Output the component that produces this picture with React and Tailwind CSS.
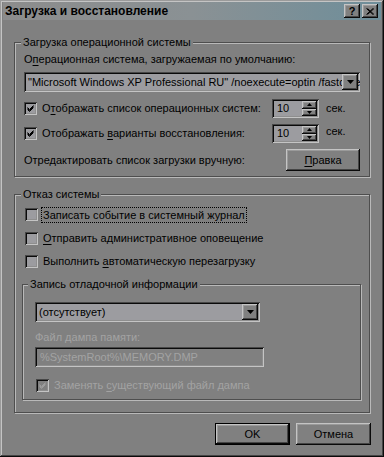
import React from "react";

const RAISED =
  "bg-[#808080] shadow-[inset_-1px_-1px_0_#0a0a0a,inset_1px_1px_0_#c4c4c4,inset_-2px_-2px_0_#454545,inset_2px_2px_0_#9a9a9a]";
const SUNKEN =
  "shadow-[inset_1px_1px_0_#474747,inset_-1px_-1px_0_#c4c4c4,inset_2px_2px_0_#0a0a0a,inset_-2px_-2px_0_#8e8e8e]";
const ETCHED =
  "border border-[#4e4e4e] shadow-[inset_1px_1px_0_#b9b9b9,1px_1px_0_#b9b9b9]";

function Check({ checked, disabled }) {
  return (
    <div
      className={`w-[13px] h-[13px] shrink-0 flex items-center justify-center ${SUNKEN} ${
        disabled ? "bg-[#808080]" : "bg-[#9c9ca0]"
      }`}
    >
      {checked && (
        <svg width="7" height="7" viewBox="0 0 7 7">
          <path
            d="M0.5 2.5 L2.5 4.5 L6.5 0.5 M0.5 3.5 L2.5 5.5 L6.5 1.5 M0.5 4.5 L2.5 6.5 L6.5 2.5"
            stroke={disabled ? "#9c9c9c" : "#000"}
            strokeWidth="1"
            fill="none"
          />
        </svg>
      )}
    </div>
  );
}

function U({ children }) {
  return <span className="underline underline-offset-[2px]">{children}</span>;
}

function DownArrow() {
  return (
    <svg width="7" height="4" viewBox="0 0 7 4">
      <path d="M0 0 H7 L3.5 4 Z" fill="#000" />
    </svg>
  );
}

function Combo({ children, className }) {
  return (
    <div className={`relative h-[20px] bg-[#9c9ca0] ${SUNKEN} ${className} flex items-center overflow-hidden`}>
      <div className="pl-[4px] pr-[20px] whitespace-nowrap overflow-hidden leading-[13px] text-black">
        {children}
      </div>
      <div
        className={`absolute right-[2px] top-[2px] bottom-[2px] w-[16px] flex items-center justify-center ${RAISED}`}
      >
        <DownArrow />
      </div>
    </div>
  );
}

function Spin({ value }) {
  return (
    <div className={`h-[19px] w-[47px] flex bg-[#9c9ca0] ${SUNKEN} p-[2px]`}>
      <div className="flex-1 pl-[3px] leading-[15px] text-black">{value}</div>
      <div className="w-[15px] flex flex-col">
        <div className={`flex-1 flex items-center justify-center ${RAISED}`}>
          <svg width="5" height="3" viewBox="0 0 5 3">
            <path d="M0 3 H5 L2.5 0 Z" fill="#000" />
          </svg>
        </div>
        <div className={`flex-1 flex items-center justify-center ${RAISED}`}>
          <svg width="5" height="3" viewBox="0 0 5 3">
            <path d="M0 0 H5 L2.5 3 Z" fill="#000" />
          </svg>
        </div>
      </div>
    </div>
  );
}

function Button({ children, isDefault, className }) {
  return (
    <div
      className={`h-[22px] w-[75px] flex items-center justify-center text-black ${
        isDefault ? "border border-black" : ""
      } ${className || ""}`}
    >
      <div className={`w-full h-full flex items-center justify-center ${RAISED}`}>{children}</div>
    </div>
  );
}

function Legend({ children, left }) {
  return (
    <div
      className={`absolute -top-[7px] ${left} px-[2px] bg-[#808080] leading-[13px] text-black whitespace-nowrap`}
    >
      {children}
    </div>
  );
}

export default function App() {
  return (
    <div
      className="w-[384px] h-[457px] bg-[#808080] flex flex-col text-[11px] text-black shadow-[inset_-1px_-1px_0_#0a0a0a,inset_1px_1px_0_#9a9a9a,inset_-2px_-2px_0_#454545,inset_2px_2px_0_#c4c4c4]"
      style={{ fontFamily: '"Liberation Sans", Arial, sans-serif' }}
    >
      {/* Title bar */}
      <div className="mx-[3px] mt-[2px] h-[18px] flex items-center bg-linear-to-r from-[#8c8c8c] via-[#8a9194] to-[#6e8e9a]">
        <div className="pl-[2px] font-bold text-[12px] leading-[14px] text-black">
          Загрузка и восстановление
        </div>
        <div className="ml-auto flex items-center mr-[3px]">
          <div
            className={`w-[16px] h-[14px] flex items-center justify-center font-bold text-[11px] leading-[11px] ${RAISED}`}
          >
            ?
          </div>
          <div
            className={`ml-[2px] w-[16px] h-[14px] flex items-center justify-center ${RAISED}`}
          >
            <svg width="8" height="7" viewBox="0 0 8 7">
              <path d="M0.5 0.5 L7 6.5 M1.5 0.5 L8 6.5 M7 0.5 L0.5 6.5 M8 0.5 L1.5 6.5" stroke="#000" strokeWidth="1" />
            </svg>
          </div>
        </div>
      </div>

      {/* Body */}
      <div className="pl-[14px] pr-[13px] flex flex-col">
        {/* Group 1 */}
        <div className={`relative mt-[22px] w-[356px] h-[135px] ${ETCHED} px-[9px] flex flex-col`}>
          <Legend left="left-[6px]">Загрузка операционной системы</Legend>
          <div className="mt-[10px] h-[13px] leading-[13px] whitespace-nowrap">
            О<U>п</U>ерационная система, загружаемая по умолчанию:
          </div>
          <Combo className="mt-[6px]">
            "Microsoft Windows XP Professional RU" /noexecute=optin /fastdetect
          </Combo>
          <div className="mt-[7px] h-[19px] flex items-center">
            <div className="w-[248px] flex items-center">
              <Check checked />
              <span className="ml-[5px] whitespace-nowrap leading-[13px]">
                О<U>т</U>ображать список операционных систем:
              </span>
            </div>
            <Spin value="10" />
            <span className="ml-[7px] leading-[13px]">сек.</span>
          </div>
          <div className="mt-[6px] h-[19px] flex items-center">
            <div className="w-[248px] flex items-center">
              <Check checked />
              <span className="ml-[5px] whitespace-nowrap leading-[13px]">
                Отображать <U>в</U>арианты восстановления:
              </span>
            </div>
            <Spin value="10" />
            <span className="ml-[7px] -mt-[4px] leading-[13px]">сек.</span>
          </div>
          <div className="mt-[6px] h-[22px] flex items-center">
            <span className="whitespace-nowrap leading-[13px]">
              Отредактировать список загрузки вручную:
            </span>
            <Button className="ml-auto !w-[74px]">
              <span className="leading-[13px]">
                <U>П</U>равка
              </span>
            </Button>
          </div>
        </div>

        {/* Group 2 */}
        <div className={`relative mt-[17px] w-[356px] h-[219px] ${ETCHED} pl-[7px] pr-[8px] flex flex-col`}>
          <Legend left="left-[6px]">Отказ системы</Legend>
          <div className="mt-[11px] h-[17px] pl-[3px] flex items-center">
            <Check />
            <span className="ml-[4px] px-[1px] whitespace-nowrap leading-[14px] outline outline-dotted outline-black">
              Записать событие в системный журнал
            </span>
          </div>
          <div className="mt-[7px] h-[17px] pl-[3px] flex items-center">
            <Check />
            <span className="ml-[5px] whitespace-nowrap leading-[13px]">
              <U>О</U>тправить административное оповещение
            </span>
          </div>
          <div className="mt-[6px] h-[17px] pl-[3px] flex items-center">
            <Check />
            <span className="ml-[5px] whitespace-nowrap leading-[13px]">
              Выполнить <U>а</U>втоматическую перезагрузку
            </span>
          </div>

          {/* Inner group */}
          <div className={`relative mt-[14px] w-[339px] h-[116px] ${ETCHED} pl-[12px] flex flex-col`}>
            <Legend left="left-[5px]">Запись отладочной информации</Legend>
            <Combo className="mt-[17px] w-[225px]">(отсутствует)</Combo>
            <div className="mt-[9px] h-[13px] leading-[13px] whitespace-nowrap text-[#a3a3a3]">
              Файл дампа памяти:
            </div>
            <div
              className={`mt-[3px] h-[20px] w-[229px] bg-[#808080] ${SUNKEN} flex items-center pl-[5px] text-[#a3a3a3] leading-[13px] whitespace-nowrap`}
            >
              %SystemRoot%\MEMORY.DMP
            </div>
            <div className="mt-[10px] h-[17px] pl-[1px] flex items-center">
              <Check checked disabled />
              <span className="ml-[5px] whitespace-nowrap leading-[13px] text-[#a3a3a3]">
                Заменять <U>с</U>уществующий файл дампа
              </span>
            </div>
          </div>
        </div>

        {/* Buttons */}
        <div className="mt-[10px] flex justify-end">
          <Button isDefault>
            <span className="leading-[13px]">OK</span>
          </Button>
          <Button className="ml-[6px]">
            <span className="leading-[13px]">Отмена</span>
          </Button>
        </div>
      </div>
    </div>
  );
}
